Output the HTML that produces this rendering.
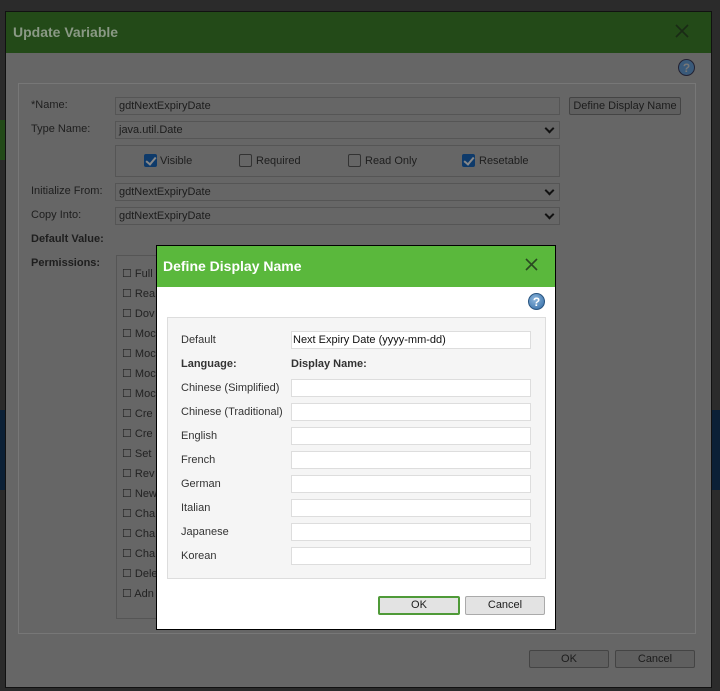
<!DOCTYPE html>
<html><head><meta charset="utf-8"><style>
*{box-sizing:border-box;margin:0;padding:0}
body{width:720px;height:691px;background:#2b2b2b;position:relative;overflow:hidden;font-family:"Liberation Sans",Arial,sans-serif;font-size:11px;color:#1c1c1c}
.a{position:absolute}
.od{left:5px;top:11px;width:707px;height:677px;background:#666;border:1px solid #111}
.oh{left:0;top:0;width:705px;height:41px;background:#234a18}
.lbl{font-size:11px;color:#1e1e1e}
.in{background:#666;border:1px solid #555;height:18px;font-size:11px;padding:2px 3px;color:#1c1c1c}
.sel::after{content:"";position:absolute;right:6px;top:3px;width:5px;height:5px;border-right:2px solid #111;border-bottom:2px solid #111;transform:rotate(45deg)}
.cb{width:13px;height:13px;border:1px solid #333;border-radius:2px}
.cbc{background:#0e3a6a;border-color:#0e3a6a}
.cbc::after{content:"";position:absolute;left:3px;top:0;width:4px;height:8px;border-right:2px solid #888;border-bottom:2px solid #888;transform:rotate(40deg)}
.btn{border:1px solid #444;border-radius:2px;background:#5f5f5f;text-align:center;font-size:11px;line-height:16px;white-space:nowrap}
.id{left:156px;top:245px;width:400px;height:385px;background:#fff;border:1px solid #000}
.il{font-size:11px;color:#333}
.ii{background:#fff;border:1px solid #ddd;height:18px;width:240px;left:123px;font-size:11px;padding:2px 1px;color:#111}
.help{width:17px;height:17px;border-radius:50%;background:radial-gradient(circle at 40% 35%,#8db6dc,#2f6aa5);color:#fff;font-weight:bold;font-size:12px;text-align:center;line-height:16px;border:1px solid #2a5580}
</style></head><body>
<div class="a" style="left:0;top:120px;width:6px;height:40px;background:#234a18"></div>
<div class="a" style="left:0;top:410px;width:6px;height:80px;background:#0b2036"></div>
<div class="a" style="left:712px;top:410px;width:8px;height:80px;background:#0b2036"></div>
<div class="a od">
 <div class="a oh"><div class="a" style="left:7px;top:12px;font-size:14px;font-weight:bold;color:#8a9985">Update Variable</div>
 <svg class="a" style="left:669px;top:12px" width="14" height="14"><path d="M1 1L13 13M13 1L1 13" stroke="#1a2a15" stroke-width="1.6"/></svg></div>
 <div class="a help" style="left:672px;top:47px;background:#3a5a7a;color:#777;border-color:#223">?</div>
 <div class="a" style="left:12px;top:71px;width:678px;height:551px;border:1px solid #777"></div>
 <div class="a lbl" style="left:25px;top:87px">*Name:</div>
 <div class="a in" style="left:109px;top:85px;width:445px">gdtNextExpiryDate</div>
 <div class="a btn" style="left:563px;top:85px;width:112px;height:18px">Define Display Name</div>
 <div class="a lbl" style="left:25px;top:111px">Type Name:</div>
 <div class="a in sel" style="left:109px;top:109px;width:445px">java.util.Date</div>
 <div class="a" style="left:109px;top:133px;width:445px;height:32px;border:1px solid #555"></div>
 <div class="a cb cbc" style="left:138px;top:142px"></div><div class="a lbl" style="left:154px;top:143px">Visible</div>
 <div class="a cb" style="left:233px;top:142px"></div><div class="a lbl" style="left:250px;top:143px">Required</div>
 <div class="a cb" style="left:342px;top:142px"></div><div class="a lbl" style="left:359px;top:143px">Read Only</div>
 <div class="a cb cbc" style="left:456px;top:142px"></div><div class="a lbl" style="left:473px;top:143px">Resetable</div>
 <div class="a lbl" style="left:25px;top:173px">Initialize From:</div>
 <div class="a in sel" style="left:109px;top:171px;width:445px">gdtNextExpiryDate</div>
 <div class="a lbl" style="left:25px;top:197px">Copy Into:</div>
 <div class="a in sel" style="left:109px;top:195px;width:445px">gdtNextExpiryDate</div>
 <div class="a lbl" style="left:25px;top:221px;font-weight:bold">Default Value:</div>
 <div class="a lbl" style="left:25px;top:245px;font-weight:bold">Permissions:</div>
 <div class="a" style="left:110px;top:243px;width:60px;height:364px;border:1px solid #555"></div>
 <div class="a" style="left:116px;top:252px;font-size:11px;line-height:20px;color:#222">
  <div>☐ Full</div><div>☐ Rea</div><div>☐ Dov</div><div>☐ Moc</div><div>☐ Moc</div><div>☐ Moc</div><div>☐ Moc</div><div>☐ Cre</div><div>☐ Cre</div><div>☐ Set</div><div>☐ Rev</div><div>☐ New</div><div>☐ Cha</div><div>☐ Cha</div><div>☐ Cha</div><div>☐ Dele</div><div>☐ Adn</div>
 </div>
 <div class="a btn" style="left:523px;top:638px;width:80px;height:18px">OK</div>
 <div class="a btn" style="left:609px;top:638px;width:80px;height:18px">Cancel</div>
</div>
<div class="a id">
 <div class="a" style="left:0;top:0;width:398px;height:41px;background:#5ab83c"><div class="a" style="left:6px;top:12px;font-size:14px;font-weight:bold;color:#fff">Define Display Name</div>
 <svg class="a" style="left:368px;top:12px" width="13" height="13"><path d="M1 1L12 12M12 1L1 12" stroke="#2a4a22" stroke-width="1.6"/></svg></div>
 <div class="a help" style="left:371px;top:47px">?</div>
 <div class="a" style="left:10px;top:71px;width:379px;height:262px;background:#f5f5f5;border:1px solid #ddd">
  <div class="a il" style="left:13px;top:16px">Default</div><div class="a ii" style="top:13px">Next Expiry Date (yyyy-mm-dd)</div>
  <div class="a il" style="left:13px;top:40px;font-weight:bold">Language:</div><div class="a il" style="left:123px;top:40px;font-weight:bold">Display Name:</div>
  <div class="a il" style="left:13px;top:64px">Chinese (Simplified)</div><div class="a ii" style="top:61px"></div>
  <div class="a il" style="left:13px;top:88px">Chinese (Traditional)</div><div class="a ii" style="top:85px"></div>
  <div class="a il" style="left:13px;top:112px">English</div><div class="a ii" style="top:109px"></div>
  <div class="a il" style="left:13px;top:136px">French</div><div class="a ii" style="top:133px"></div>
  <div class="a il" style="left:13px;top:160px">German</div><div class="a ii" style="top:157px"></div>
  <div class="a il" style="left:13px;top:184px">Italian</div><div class="a ii" style="top:181px"></div>
  <div class="a il" style="left:13px;top:208px">Japanese</div><div class="a ii" style="top:205px"></div>
  <div class="a il" style="left:13px;top:232px">Korean</div><div class="a ii" style="top:229px"></div>
 </div>
 <div class="a btn" style="left:221px;top:350px;width:82px;height:19px;background:#e3e3e3;border:2px solid #4f9a38;line-height:15px">OK</div>
 <div class="a btn" style="left:308px;top:350px;width:80px;height:19px;background:#e3e3e3;border-color:#aaa">Cancel</div>
</div>
</body></html>
